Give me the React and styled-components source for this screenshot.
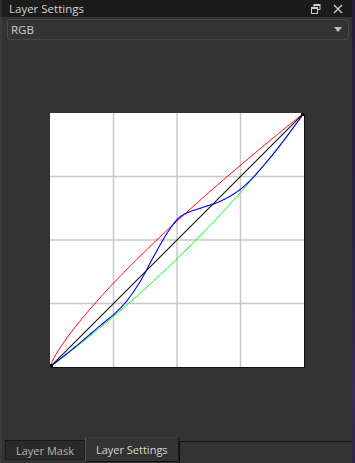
import React from "react";
import styled, { createGlobalStyle } from "styled-components";

const Global = createGlobalStyle`
  html, body { margin: 0; padding: 0; background: #2a2440; }
  #root { width: 355px; height: 463px; overflow: hidden; }
`;

const Frame = styled.div`
  display: flex;
  width: 355px;
  height: 463px;
  font-family: "Open Sans", "Noto Sans", sans-serif;
`;

const Panel = styled.div`
  width: 352px;
  height: 463px;
  display: flex;
  flex-direction: column;
  background: #333333;
  border-left: 2px solid #3c3c3c;
  box-sizing: border-box;
`;

const Edge = styled.div`
  width: 3px;
  height: 463px;
  background: linear-gradient(180deg, #241e38 0%, #2b2545 60%, #3a2f55 85%, #2a2342 100%);
`;

const TitleBar = styled.div`
  height: 17px;
  background: #1b1b1b;
  display: flex;
  align-items: center;
  padding: 0 9px 0 7px;
  margin-left: -2px;
  border-left: 2px solid #2e2e2e;
`;

const Title = styled.div`
  flex: 1;
  color: #d4d4d4;
  font-size: 11.5px;
  line-height: 17px;
`;

const TitleIcons = styled.div`
  display: flex;
  gap: 12px;
  align-items: center;
  color: #cfcfcf;
`;

const Select = styled.div`
  margin: 2px 3px 0 5px;
  height: 19px;
  border: 1px solid #474747;
  border-radius: 3px;
  display: flex;
  align-items: center;
  padding: 0 6px 0 3px;
  color: #cfcfcf;
  font-size: 11.5px;
  background: #333333;
`;

const SelectLabel = styled.div`
  flex: 1;
`;

const Arrow = styled.div`
  width: 0;
  height: 0;
  border-left: 4px solid transparent;
  border-right: 4px solid transparent;
  border-top: 5px solid #bdbdbd;
`;

const Content = styled.div`
  flex: 1;
  display: flex;
  justify-content: center;
  padding-top: 73px;
`;

const Graph = styled.div`
  width: 254px;
  height: 254px;
  background: #ffffff;
  box-shadow: 1px 1px 0 #111111;
`;

const TabBar = styled.div`
  height: 26px;
  display: flex;
  align-items: flex-end;
  padding-left: 3px;
`;

const Tab = styled.div`
  box-sizing: border-box;
  height: ${(p) => (p.$active ? "25px" : "20px")};
  margin-bottom: ${(p) => (p.$active ? "1px" : "3px")};
  padding: 0 10px;
  display: flex;
  align-items: center;
  font-size: 11px;
  color: ${(p) => (p.$active ? "#d6d6d6" : "#b4b4b4")};
  background: ${(p) => (p.$active ? "#333333" : "#2a2a2a")};
  border: 1px solid ${(p) => (p.$active ? "#1a1a1a" : "#1e1e1e")};
  border-top: ${(p) => (p.$active ? "1px solid #3a3a3a" : "1px solid #151515")};
  border-left: ${(p) => (p.$active ? "1px solid #555" : "1px solid #1e1e1e")};
  border-bottom: ${(p) => (p.$active ? "1px solid #111" : "1px solid #1e1e1e")};
  border-radius: 1px;
`;

const TabRest = styled.div`
  flex: 1;
  height: 22px;
  border-top: 1px solid #111111;
  border-left: 1px solid #111111;
  box-sizing: border-box;
`;

const S = 254;
const toPath = (pts) =>
  pts.map(([x, y], i) => `${i ? "L" : "M"}${(x * S).toFixed(2)},${((1 - y) * S).toFixed(2)}`).join(" ");

const catmull = (pts, seg = 12) => {
  const out = [pts[0]];
  for (let i = 0; i < pts.length - 1; i++) {
    const p0 = pts[Math.max(0, i - 1)];
    const p1 = pts[i];
    const p2 = pts[i + 1];
    const p3 = pts[Math.min(pts.length - 1, i + 2)];
    for (let k = 1; k <= seg; k++) {
      const t = k / seg, t2 = t * t, t3 = t2 * t;
      const f = (a, b, c, d) =>
        0.5 * (2 * b + (-a + c) * t + (2 * a - 5 * b + 4 * c - d) * t2 + (-a + 3 * b - 3 * c + d) * t3);
      out.push([f(p0[0], p1[0], p2[0], p3[0]), f(p0[1], p1[1], p2[1], p3[1])]);
    }
  }
  return out;
};

const redPts = Array.from({ length: 121 }, (_, i) => {
  const x = i / 120;
  return [x, Math.pow(x, 0.8)];
});

const bez = (p1, p2, n = 120) =>
  Array.from({ length: n + 1 }, (_, i) => {
    const t = i / n, u = 1 - t;
    return [
      3 * u * u * t * p1[0] + 3 * u * t * t * p2[0] + t * t * t,
      3 * u * u * t * p1[1] + 3 * u * t * t * p2[1] + t * t * t,
    ];
  });

const greenPts = bez([0.4, 0.3], [0.75, 0.65]);

const bluePts = catmull([
  [0, 0], [0.1, 0.08], [0.2, 0.165], [0.26, 0.215], [0.31, 0.27], [0.36, 0.345],
  [0.4, 0.42], [0.44, 0.492], [0.475, 0.548], [0.505, 0.585], [0.54, 0.607],
  [0.6, 0.628], [0.66, 0.648], [0.72, 0.679], [0.77, 0.717], [0.82, 0.769],
  [0.9, 0.865], [1, 1],
]);

const CurveChart = () => (
  <svg width={S} height={S} viewBox={`0 0 ${S} ${S}`} style={{ display: "block" }}>
    {[63.5, 127, 190.5].map((v) => (
      <g key={v}>
        <line x1={v} y1={0} x2={v} y2={S} stroke="#c8c8c8" strokeWidth="1.5" />
        <line x1={0} y1={v} x2={S} y2={v} stroke="#c8c8c8" strokeWidth="1.5" />
      </g>
    ))}
    <path d={toPath(redPts)} fill="none" stroke="#ff0000" strokeWidth="1" />
    <path d={toPath(greenPts)} fill="none" stroke="#00ff00" strokeWidth="1" />
    <path d={toPath(bluePts)} fill="none" stroke="#0000ff" strokeWidth="1.1" />
    <line x1={0} y1={S} x2={S} y2={0} stroke="#111111" strokeWidth="1.1" />
    <rect x={-1} y={S - 3} width={4} height={4} fill="#000" />
    <rect x={S - 3} y={-1} width={4} height={4} fill="#000" />
  </svg>
);

const RestoreIcon = () => (
  <svg width="10" height="10" viewBox="0 0 10 10">
    <rect x="3" y="0.5" width="6" height="5" fill="none" stroke="#cfcfcf" strokeWidth="1" />
    <rect x="0.5" y="3.5" width="6" height="6" fill="#1b1b1b" stroke="#cfcfcf" strokeWidth="1" />
    <line x1="0.5" y1="4.5" x2="6.5" y2="4.5" stroke="#cfcfcf" strokeWidth="1" />
    <line x1="3" y1="1.5" x2="9" y2="1.5" stroke="#cfcfcf" strokeWidth="1" />
  </svg>
);

const CloseIcon = () => (
  <svg width="10" height="10" viewBox="0 0 10 10">
    <path d="M1 1 L9 9 M9 1 L1 9" stroke="#cfcfcf" strokeWidth="1.3" />
  </svg>
);

export default function App() {
  return (
    <>
      <Global />
      <Frame>
        <Panel>
          <TitleBar>
            <Title>Layer Settings</Title>
            <TitleIcons>
              <RestoreIcon />
              <CloseIcon />
            </TitleIcons>
          </TitleBar>
          <Select>
            <SelectLabel>RGB</SelectLabel>
            <Arrow />
          </Select>
          <Content>
            <Graph>
              <CurveChart />
            </Graph>
          </Content>
          <TabBar>
            <Tab>Layer Mask</Tab>
            <Tab $active>Layer Settings</Tab>
            <TabRest />
          </TabBar>
        </Panel>
        <Edge />
      </Frame>
    </>
  );
}
